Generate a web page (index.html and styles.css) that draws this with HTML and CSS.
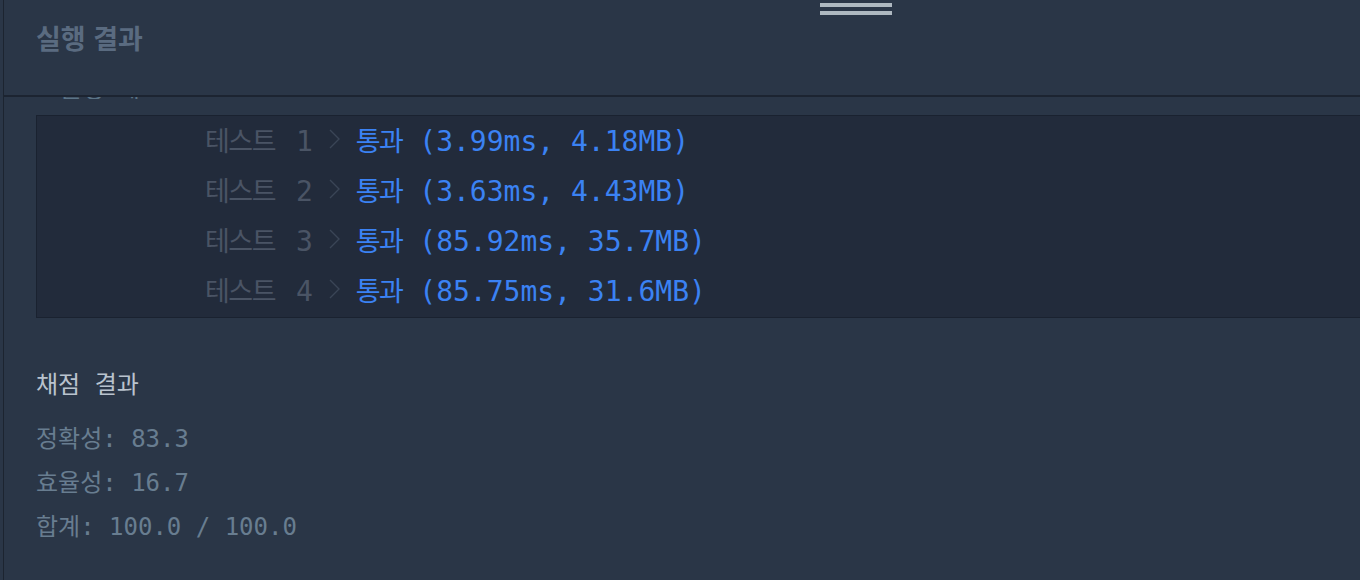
FILE: index.html
```html
<!DOCTYPE html>
<html lang="ko">
<head>
<meta charset="utf-8">
<title>실행 결과</title>
<link rel="stylesheet" href="styles.css">
</head>
<body>
<div class="panel">
  <div class="handle"><span></span><span></span></div>
  <header class="panel-header">
    <h2 class="panel-title">실행 결과</h2>
  </header>
  <div class="panel-body">
    <div class="prev-line"><span class="ko">효율성  테스트</span></div>
    <div class="test-box">
      <div class="row"><span class="lbl"><span class="ko">테스트</span> 1</span><svg class="arrow" width="11" height="20" viewBox="0 0 11 20"><polyline points="1,1 10,10 1,19" fill="none" stroke="currentColor" stroke-width="1.4"/></svg><span class="res"><span class="ko">통과</span> (3.99ms, 4.18MB)</span></div>
      <div class="row"><span class="lbl"><span class="ko">테스트</span> 2</span><svg class="arrow" width="11" height="20" viewBox="0 0 11 20"><polyline points="1,1 10,10 1,19" fill="none" stroke="currentColor" stroke-width="1.4"/></svg><span class="res"><span class="ko">통과</span> (3.63ms, 4.43MB)</span></div>
      <div class="row"><span class="lbl"><span class="ko">테스트</span> 3</span><svg class="arrow" width="11" height="20" viewBox="0 0 11 20"><polyline points="1,1 10,10 1,19" fill="none" stroke="currentColor" stroke-width="1.4"/></svg><span class="res"><span class="ko">통과</span> (85.92ms, 35.7MB)</span></div>
      <div class="row"><span class="lbl"><span class="ko">테스트</span> 4</span><svg class="arrow" width="11" height="20" viewBox="0 0 11 20"><polyline points="1,1 10,10 1,19" fill="none" stroke="currentColor" stroke-width="1.4"/></svg><span class="res"><span class="ko">통과</span> (85.75ms, 31.6MB)</span></div>
    </div>
    <div class="grade">
      <div class="grade-title"><span class="ko">채점</span> <span class="ko">결과</span></div>
      <div class="grade-line"><span class="ko">정확성</span>: 83.3</div>
      <div class="grade-line"><span class="ko">효율성</span>: 16.7</div>
      <div class="grade-line"><span class="ko">합계</span>: 100.0 / 100.0</div>
    </div>
  </div>
</div>
</body>
</html>
```
FILE: styles.css
```css
html, body {
  margin: 0;
  padding: 0;
  background: #2a3647;
  overflow: hidden;
  height: 100%;
}

.panel {
  position: relative;
  margin-left: 3px;
  border-left: 1px solid #1c2430;
  height: 100%;
  box-sizing: border-box;
  font-family: "DejaVu Sans Mono", "Noto Sans CJK KR", monospace;
}

.handle {
  position: absolute;
  top: 3px;
  left: 816px;
  width: 72px;
  display: flex;
  flex-direction: column;
  gap: 4px;
}
.handle span {
  display: block;
  height: 4px;
  background: #aeb8c0;
}

.panel-header {
  height: 97px;
  box-sizing: border-box;
  border-bottom: 2px solid #1c2431;
  padding: 20px 0 0 32px;
}
.panel-title {
  margin: 0;
  font-family: "Noto Sans CJK KR", sans-serif;
  font-weight: 700;
  font-size: 27px;
  line-height: 36px;
  color: #5a6b80;
}

.panel-body {
  overflow: hidden;
  padding-left: 32px;
}

.ko {
  font-family: "Noto Sans CJK KR", sans-serif;
}

.prev-line {
  height: 2px;
  overflow: hidden;
  font-size: 24px;
  color: #5b7487;
  white-space: pre;
  padding-left: 2px;
}
.prev-line .ko {
  display: block;
  line-height: 30px;
  margin-top: -25px;
}

.test-box {
  margin-top: 16px;
  margin-right: -40px;
  background: #222b3b;
  border: 1px solid #1a2230;
  padding: 0 0 1px 168px;
}

.row {
  display: flex;
  align-items: center;
  height: 50px;
  box-sizing: border-box;
  padding-bottom: 4px;
  font-size: 28px;
  white-space: pre;
}
.row .ko {
  font-size: 27px;
  letter-spacing: -1.5px;
}
.lbl {
  color: #4a5465;
  word-spacing: 4px;
}
.arrow {
  color: #3a4556;
  margin-left: 16px;
  margin-right: 16px;
}
.res {
  color: #3b82f3;
}

.grade {
  padding-top: 43px;
  font-size: 24px;
}
.grade-title {
  height: 44px;
  line-height: 44px;
  color: #b9c3ce;
  margin-bottom: 10px;
  white-space: pre;
}
.grade-line {
  height: 44px;
  line-height: 44px;
  color: #687d90;
  white-space: pre;
}
```
